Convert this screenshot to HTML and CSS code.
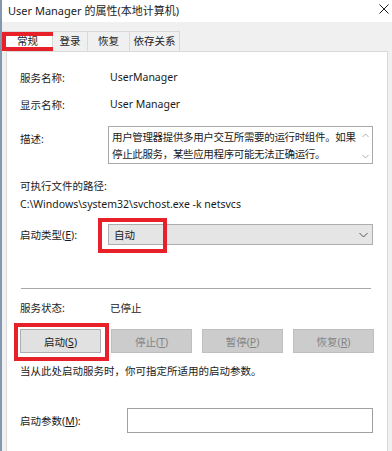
FILE: index.html
```html
<!DOCTYPE html>
<html lang="zh-CN">
<head>
<meta charset="utf-8">
<title>User Manager 的属性(本地计算机)</title>
<link rel="stylesheet" href="styles.css">
</head>
<body>
<div class="window">
  <div class="titlebar">
    <span class="title">User Manager 的属性(本地计算机)</span>
    <svg class="close" width="10" height="10" viewBox="0 0 10 10"><path d="M0.5 0.5L9.5 9.5M9.5 0.5L0.5 9.5" stroke="#222" stroke-width="1" fill="none"/></svg>
  </div>
  <div class="tabstrip">
    <div class="tab active">常规<span class="mark mark-tab"></span></div>
    <div class="tab">登录</div>
    <div class="tab">恢复</div>
    <div class="tab">依存关系</div>
  </div>
  <div class="panel">
    <div class="row r1"><span class="label">服务名称:</span><span class="value">UserManager</span></div>
    <div class="row r2"><span class="label">显示名称:</span><span class="value">User Manager</span></div>
    <div class="row r3">
      <span class="label top">描述:</span>
      <div class="desc">
        <div class="desc-text">用户管理器提供多用户交互所需要的运行时组件。如果停止此服务，某些应用程序可能无法正确运行。</div>
        <div class="scroll">
          <svg width="7" height="5" viewBox="0 0 7 5"><path d="M0.5 4L3.5 1L6.5 4" stroke="#b0b0b0" fill="none"/></svg>
          <svg width="7" height="5" viewBox="0 0 7 5"><path d="M0.5 1L3.5 4L6.5 1" stroke="#b0b0b0" fill="none"/></svg>
        </div>
      </div>
    </div>
    <div class="line pathlabel">可执行文件的路径:</div>
    <div class="line path">C:\Windows\system32\svchost.exe -k netsvcs</div>
    <div class="row r4">
      <span class="label">启动类型(<u>E</u>):</span>
      <div class="select">
        <span>自动</span>
        <svg width="9" height="6" viewBox="0 0 9 6"><path d="M0.5 1L4.5 5L8.5 1" stroke="#555" fill="none"/></svg>
        <span class="mark mark-select"></span>
      </div>
    </div>
    <div class="sep"></div>
    <div class="row r5"><span class="label">服务状态:</span><span class="value">已停止</span></div>
    <div class="buttons">
      <button class="btn">启动(<u>S</u>)<span class="mark mark-btn"></span></button>
      <button class="btn disabled">停止(<u>T</u>)</button>
      <button class="btn disabled">暂停(<u>P</u>)</button>
      <button class="btn disabled">恢复(<u>R</u>)</button>
    </div>
    <div class="line note">当从此处启动服务时，你可指定所适用的启动参数。</div>
    <div class="row r6">
      <span class="label wide">启动参数(<u>M</u>):</span>
      <div class="input"></div>
    </div>
  </div>
</div>
</body>
</html>
```
FILE: styles.css
```css
* { box-sizing: border-box; }
html, body { margin: 0; padding: 0; }
body {
  width: 392px;
  height: 451px;
  overflow: hidden;
  background: #f0f0f0;
  font-family: "Noto Sans", "Noto Sans CJK SC", sans-serif;
  font-size: 10.5px;
  color: #1a1a1a;
}
.window {
  width: 392px;
  height: 451px;
  border-left: 2px solid #8397ae;
  background: #f0f0f0;
  display: flex;
  flex-direction: column;
}
.titlebar {
  height: 22px;
  background: #fff;
  display: flex;
  align-items: center;
  justify-content: space-between;
  padding: 0 3px 2px 6px;
}
.title { font-size: 11px; color: #222; }
.close { margin-top: -2px; }
.tabstrip {
  height: 29px;
  display: flex;
  align-items: flex-end;
}
.tab {
  position: relative;
  height: 20px;
  line-height: 19px;
  border: 1px solid #d9d9d9;
  border-bottom: none;
  border-left: none;
  background: #f0f0f0;
  color: #222;
  white-space: nowrap;
  text-align: center;
  flex: none;
}
.tab.active {
  width: 51px;
  background: #fff;
  border-left: 1px solid #d9d9d9;
}
.tab:nth-child(2) { width: 35px; }
.tab:nth-child(3) { width: 42px; }
.tab:nth-child(4) { width: 50px; }
.panel {
  flex: 1;
  margin: 0 4px 0 4px;
  background: #fff;
  border: 1px solid #d9d9d9;
  border-bottom: none;
  padding: 0 0 0 13px;
}
.mark {
  position: absolute;
  border: 4px solid #e8202a;
  pointer-events: none;
}
.mark-tab { left: -1px; top: 0; width: 55px; height: 19px; }
.row { display: flex; align-items: center; }
.label { width: 90px; flex: none; }
.label.wide { width: 107px; }
.label.top { align-self: flex-start; padding-top: 5px; }
.line { height: 16px; line-height: 16px; white-space: nowrap; }
.row.r1 { height: 16px; margin-top: 17px; }
.row.r2 { height: 16px; margin-top: 11px; }
.row.r3 { margin-top: 14px; align-items: flex-start; }
.desc {
  width: 265px;
  height: 38px;
  border: 1px solid #a9a9a9;
  display: flex;
  padding: 2px 0 0 3px;
  margin-left: -2px;
}
.desc-text { flex: 1; line-height: 17px; letter-spacing: -0.35px; }
.scroll {
  width: 13px;
  flex: none;
  display: flex;
  flex-direction: column;
  justify-content: space-between;
  align-items: center;
  padding: 4px 0 4px 0;
}
.pathlabel { margin-top: 14px; }
.path { margin-top: 2px; }
.row.r4 { margin-top: 12px; }
.select {
  position: relative;
  width: 265px;
  height: 21px;
  margin-left: -2px;
  background: #e5e5e5;
  border: 1px solid #adadad;
  display: flex;
  align-items: center;
  justify-content: space-between;
  padding: 0 4px 0 5px;
}
.mark-select { left: -11px; top: -7px; width: 69px; height: 35px; }
.sep {
  margin: 43px 0 0 1px;
  width: 350px;
  height: 1px;
  background: #a8a8a8;
}
.row.r5 { height: 16px; margin-top: 10px; }
.buttons {
  margin-top: 14px;
  display: flex;
  gap: 10px;
}
.btn {
  position: relative;
  width: 81px;
  height: 24px;
  font: inherit;
  color: #1a1a1a;
  background: #e1e1e1;
  border: 1px solid #adadad;
  padding: 0;
}
.btn.disabled {
  background: #cccccc;
  border-color: #bfbfbf;
  color: #838383;
}
.mark-btn { left: -7px; top: -7px; width: 95px; height: 38px; }
.note { margin-top: 10px; }
.row.r6 { margin-top: 29px; }
.input {
  width: 246px;
  height: 25px;
  border: 1px solid #a0a0a0;
  background: #fff;
}
u { text-decoration: underline; text-underline-offset: 1px; }
```
